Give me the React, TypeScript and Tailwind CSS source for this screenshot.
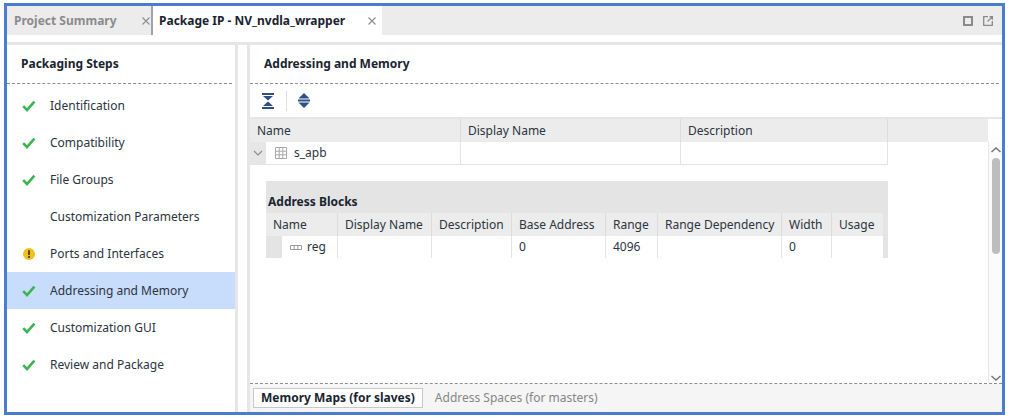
const F = "font-['Noto_Sans',sans-serif]";

function Check() {
  return (
    <svg width="14" height="12" viewBox="0 0 14 12" className="shrink-0">
      <path d="M1.2 6.2 L5 10 L12.4 1.6" fill="none" stroke="#3cb550" strokeWidth="2.6" />
    </svg>
  );
}

function Warn() {
  return (
    <svg width="12" height="12" viewBox="0 0 12 12" className="shrink-0">
      <circle cx="6" cy="6" r="6" fill="#eec21a" />
      <rect x="5" y="2.2" width="2" height="4.8" fill="#5a4a10" />
      <rect x="5" y="8" width="2" height="2" fill="#5a4a10" />
    </svg>
  );
}

const steps: { label: string; icon: "check" | "warn" | "none"; selected?: boolean }[] = [
  { label: "Identification", icon: "check" },
  { label: "Compatibility", icon: "check" },
  { label: "File Groups", icon: "check" },
  { label: "Customization Parameters", icon: "none" },
  { label: "Ports and Interfaces", icon: "warn" },
  { label: "Addressing and Memory", icon: "check", selected: true },
  { label: "Customization GUI", icon: "check" },
  { label: "Review and Package", icon: "check" },
];

function Dashes({ className = "" }: { className?: string }) {
  return <div className={`h-px border-t border-dashed border-[#8f8f8f] ${className}`} />;
}

function HeadCell({ w, children, last }: { w: string; children?: React.ReactNode; last?: boolean }) {
  return (
    <div className={`${w} h-full flex items-center pl-[7px] ${last ? "" : "border-r border-[#dcdcdc]"} whitespace-nowrap`}>
      {children}
    </div>
  );
}

export default function App() {
  return (
    <div className={`${F} w-[1011px] h-[418px] bg-white pl-1 pt-[3px] pr-[6px] pb-[3px] text-[12px] text-[#2b3440]`}>
      <div className="w-full h-full border-[3px] border-[#4a7ccf] bg-white flex flex-col overflow-hidden">
        {/* tab strip */}
        <div className="h-[29px] shrink-0 bg-[#ececec] flex items-stretch">
          <div className="w-[144px] flex items-center pl-[7px] font-bold text-[#8b8b8b]">
            <span>Project Summary</span>
            <span className="ml-auto mr-[1px]"><X /></span>
          </div>
          <div className="w-[231px] bg-white border-l-2 border-[#9fa3a8] flex items-center pl-[6px] font-bold text-[#1a2430]">
            <span>Package IP - NV_nvdla_wrapper</span>
            <span className="ml-auto mr-[6px]"><X /></span>
          </div>
          <div className="ml-auto flex items-center gap-[10px] pr-[9px]">
            <svg width="10" height="10" viewBox="0 0 10 10"><rect x="1" y="1" width="8" height="8" fill="none" stroke="#8a8a8a" strokeWidth="2" /></svg>
            <svg width="10" height="10" viewBox="0 0 10 10"><path d="M5 .7H.7v8.6h8.6V5" fill="none" stroke="#8a8a8a" strokeWidth="1.3" /><path d="M4.5 5.5 9 1M6.5 .7h3v3" fill="none" stroke="#8a8a8a" strokeWidth="1.2" /></svg>
          </div>
        </div>
        <div className="h-[10px] shrink-0 bg-white border-b-[3px] border-[#e6e6e6]" />

        <div className="flex-1 min-h-0 flex">
          {/* left panel */}
          <div className="w-[231px] shrink-0 border-r-[3px] border-[#e6e6e6] flex flex-col">
            <div className="h-[38px] shrink-0 flex items-center pl-[14px] font-bold text-[#1a2430]">Packaging Steps</div>
            <Dashes className="mr-[3px]" />
            <div className="pt-[3px] flex flex-col">
              {steps.map((s) => (
                <div key={s.label} className={`h-[37px] -mb-[0px] flex items-center ${s.selected ? "bg-[#c8dcfb]" : ""}`}>
                  <div className="w-[43px] flex justify-center pl-[1px]">
                    {s.icon === "check" && <Check />}
                    {s.icon === "warn" && <Warn />}
                  </div>
                  <span>{s.label}</span>
                </div>
              ))}
            </div>
          </div>
          <div className="w-[9px] shrink-0 bg-white" />
          {/* right panel */}
          <div className="flex-1 min-w-0 border-l-[3px] border-[#e6e6e6] flex flex-col">
            <div className="h-[38px] shrink-0 flex items-center pl-[14px] font-bold text-[#1a2430]">Addressing and Memory</div>
            <Dashes className="mr-[3px]" />
            <div className="h-[33px] shrink-0 flex items-center pl-[11px]">
              <svg width="14" height="16" viewBox="0 0 14 16">
                <rect x="1" y="0" width="12" height="2" fill="#2f4f86" />
                <path d="M2 3h10L7 7.5zM2 13h10L7 8.5z" fill="#2f4f86" />
                <rect x="1" y="14" width="12" height="2" fill="#2f4f86" />
              </svg>
              <div className="w-px h-5 bg-[#e0e0e0] ml-[11px] mr-[11px]" />
              <svg width="12" height="15" viewBox="0 0 12 15">
                <path d="M6 0 11.5 5.5H.5zM.5 9.5h11L6 15z" fill="#2f4f86" />
                <rect x="0" y="6.5" width="12" height="2" fill="#2f4f86" />
              </svg>
            </div>
            <div className="h-[2px] shrink-0 bg-[#e6e6e6]" />
            {/* table + scrollbar */}
            <div className="flex-1 min-h-0 flex">
              <div className="flex-1 min-w-0 flex flex-col">
                <div className="h-[23px] shrink-0 bg-[#ececec] flex items-center">
                  <HeadCell w="w-[211px]">Name</HeadCell>
                  <HeadCell w="w-[220px]">Display Name</HeadCell>
                  <HeadCell w="w-[207px]">Description</HeadCell>
                </div>
                <div className="h-[23px] shrink-0 w-[638px] flex border-b border-r border-[#e4e4e4]">
                  <div className="w-[16px] bg-[#e6e6e6] flex items-center justify-center">
                    <svg width="10" height="6" viewBox="0 0 10 6"><path d="M1 1l4 4 4-4" fill="none" stroke="#8a8a8a" strokeWidth="1.1" /></svg>
                  </div>
                  <div className="w-[195px] flex items-center pl-[9px] gap-[7px] border-r border-[#e4e4e4]">
                    <svg width="12" height="12" viewBox="0 0 12 12"><path d="M.5.5h11v11H.5zM.5 4.2h11M.5 7.8h11M4.2.5v11M7.8.5v11" fill="none" stroke="#a9a9a9" strokeWidth="1" /></svg>
                    <span>s_apb</span>
                  </div>
                  <div className="w-[220px] border-r border-[#e4e4e4]" />
                </div>
                <div className="h-[16px] shrink-0" />
                {/* nested */}
                <div className="ml-[16px] w-[622px] flex flex-col bg-[#e4e4e4]">
                  <div className="h-[32px] flex items-end pb-[2px] pl-[2px] font-bold text-[#1a2430]">Address Blocks</div>
                  <div className="h-[23px] bg-[#ececec] flex mr-[5px]">
                    <HeadCell w="w-[72px]"><span className="pl-[0px]">Name</span></HeadCell>
                    <HeadCell w="w-[94px]">Display Name</HeadCell>
                    <HeadCell w="w-[80px]">Description</HeadCell>
                    <HeadCell w="w-[94px]">Base Address</HeadCell>
                    <HeadCell w="w-[52px]">Range</HeadCell>
                    <HeadCell w="w-[124px]">Range Dependency</HeadCell>
                    <HeadCell w="w-[50px]">Width</HeadCell>
                    <HeadCell w="w-[51px]" last>Usage</HeadCell>
                  </div>
                  <div className="h-[22px] bg-white flex mr-[5px]">
                    <div className="w-[16px] bg-[#e4e4e4]" />
                    <div className="w-[56px] flex items-center pl-[8px] gap-[5px] border-r border-[#e4e4e4]">
                      <svg width="12" height="5" viewBox="0 0 12 5"><path d="M.5.5h11v4H.5zM4.2.5v4M7.8.5v4" fill="none" stroke="#9a9a9a" strokeWidth="1" /></svg>
                      <span>reg</span>
                    </div>
                    <div className="w-[94px] border-r border-[#e4e4e4]" />
                    <div className="w-[80px] border-r border-[#e4e4e4]" />
                    <div className="w-[94px] border-r border-[#e4e4e4] flex items-center pl-[7px]">0</div>
                    <div className="w-[52px] border-r border-[#e4e4e4] flex items-center pl-[7px]">4096</div>
                    <div className="w-[124px] border-r border-[#e4e4e4]" />
                    <div className="w-[50px] border-r border-[#e4e4e4] flex items-center pl-[7px]">0</div>
                    <div className="flex-1" />
                  </div>
                </div>
              </div>
              <div className="w-[14px] shrink-0 flex flex-col items-center border-l border-[#e6e6e6] bg-[#fbfbfb] mt-[23px] relative">
                <svg width="10" height="6" viewBox="0 0 10 6" className="mt-[5px]"><path d="M.5 5 5 1l4.5 4" fill="none" stroke="#777" strokeWidth="1.5" /></svg>
                <div className="w-[8px] h-[96px] mt-[5px] rounded-[4px] bg-[#bdbdbd]" />
                <svg width="10" height="6" viewBox="0 0 10 6" className="mt-auto mb-[2px]"><path d="M.5 1 5 5l4.5-4" fill="none" stroke="#777" strokeWidth="1.5" /></svg>
              </div>
            </div>
            <Dashes />
            <div className="h-[28px] shrink-0 bg-[#f5f5f5] flex items-center pl-[3px]">
              <div className="h-[20px] px-[7px] flex items-center bg-white border border-[#c8c8c8] font-bold text-[#1a2430]">Memory Maps (for slaves)</div>
              <div className="pl-[12px] text-[#868686]">Address Spaces (for masters)</div>
            </div>
          </div>
        </div>
      </div>
    </div>
  );
}

function X() {
  return (
    <svg width="8" height="8" viewBox="0 0 8 8" className="block"><path d="M.5.5l7 7M7.5.5l-7 7" stroke="#8e8e8e" strokeWidth="1.1" /></svg>
  );
}
